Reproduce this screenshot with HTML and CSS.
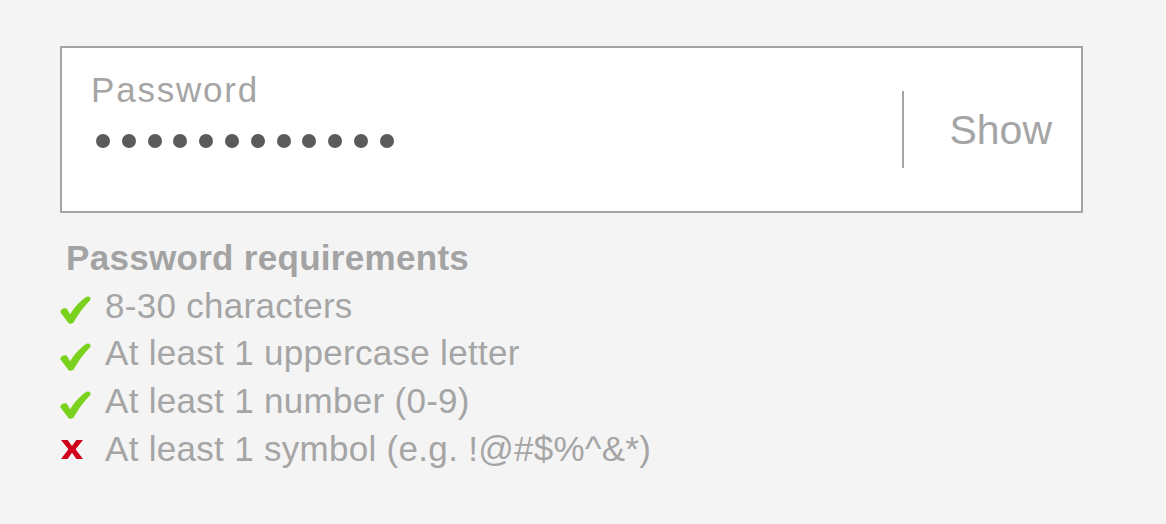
FILE: index.html
```html
<!DOCTYPE html>
<html lang="en">
<head>
    <meta charset="UTF-8">
    <title>Password</title>
    <link rel="stylesheet" href="styles.css">
</head>
<body>
    <div class="page">
        <div class="field">
            <div class="field-main">
                <div class="field-label">Password</div>
                <div class="dots">
                    <span></span><span></span><span></span><span></span>
                    <span></span><span></span><span></span><span></span>
                    <span></span><span></span><span></span><span></span>
                </div>
            </div>
            <div class="divider"></div>
            <div class="show">Show</div>
        </div>

        <div class="reqs">
            <div class="reqs-title">Password requirements</div>
            <ul>
                <li class="ok">
                    <svg class="icon check" viewBox="0 0 31 28"><path d="M0.2 16 C1 13.2 4 11.2 6.6 12.6 L10.2 18.2 C15 10.2 21 4 26.8 0.7 C29.4 -0.5 31.6 2 30 4.2 C24 10.4 18.2 18.2 13.8 26 C12.6 28 9.2 28.4 8 26.4 Z"/></svg>
                    <span>8-30 characters</span>
                </li>
                <li class="ok">
                    <svg class="icon check" viewBox="0 0 31 28"><path d="M0.2 16 C1 13.2 4 11.2 6.6 12.6 L10.2 18.2 C15 10.2 21 4 26.8 0.7 C29.4 -0.5 31.6 2 30 4.2 C24 10.4 18.2 18.2 13.8 26 C12.6 28 9.2 28.4 8 26.4 Z"/></svg>
                    <span>At least 1 uppercase letter</span>
                </li>
                <li class="ok">
                    <svg class="icon check" viewBox="0 0 31 28"><path d="M0.2 16 C1 13.2 4 11.2 6.6 12.6 L10.2 18.2 C15 10.2 21 4 26.8 0.7 C29.4 -0.5 31.6 2 30 4.2 C24 10.4 18.2 18.2 13.8 26 C12.6 28 9.2 28.4 8 26.4 Z"/></svg>
                    <span>At least 1 number (0-9)</span>
                </li>
                <li class="fail">
                    <svg class="icon cross" viewBox="0 0 22 19"><path d="M0 0 H6.6 L11 6 L15.4 0 H22 L14.6 9.3 L22 19 H15.4 L11 12.8 L6.6 19 H0 L7.4 9.3 Z"/></svg>
                    <span>At least 1 symbol (e.g. !@#$%^&amp;*)</span>
                </li>
            </ul>
        </div>
    </div>
</body>
</html>
```

FILE: styles.css
```css
body {
    margin: 0;
    background: #f4f4f4;
    font-family: 'Liberation Sans', Arial, Helvetica, sans-serif;
}
.page {
    padding: 46px 0 0 60px;
}
.field {
    box-sizing: border-box;
    width: 1023px;
    height: 167px;
    background: #fff;
    border: 2px solid #a4a4a4;
    display: flex;
    align-items: center;
    padding: 0 29px 0 29px;
}
.field-main {
    flex: 1;
    align-self: flex-start;
    padding-top: 22px;
}
.field-label {
    font-size: 35px;
    line-height: 40px;
    letter-spacing: 1.8px;
    color: #a5a5a5;
}
.dots {
    display: flex;
    gap: 11.8px;
    margin-top: 24px;
    padding-left: 5px;
}
.dots span {
    width: 14px;
    height: 14px;
    border-radius: 50%;
    background: #5b5b5b;
}
.divider {
    width: 2px;
    height: 77px;
    background: #a4a4a4;
    margin-right: 45px;
}
.show {
    font-size: 41px;
    line-height: 48px;
    color: #a5a5a5;
}
.reqs {
    margin-top: 21px;
}
.reqs-title {
    font-size: 35px;
    font-weight: bold;
    line-height: 47.7px;
    letter-spacing: 0.3px;
    color: #a3a3a3;
    padding-left: 6px;
}
.reqs ul {
    list-style: none;
    margin: 0;
    padding: 0;
}
.reqs li {
    display: flex;
    align-items: flex-start;
    font-size: 35px;
    line-height: 47.7px;
    letter-spacing: 0.3px;
    color: #a5a5a5;
}
.icon {
    flex: none;
}
.check {
    width: 31px;
    height: 28px;
    margin: 14px 14px 0 0;
    fill: #7ad21e;
}
.cross {
    width: 22px;
    height: 19px;
    margin: 15px 22px 0 1px;
    fill: #d0021b;
}
```
